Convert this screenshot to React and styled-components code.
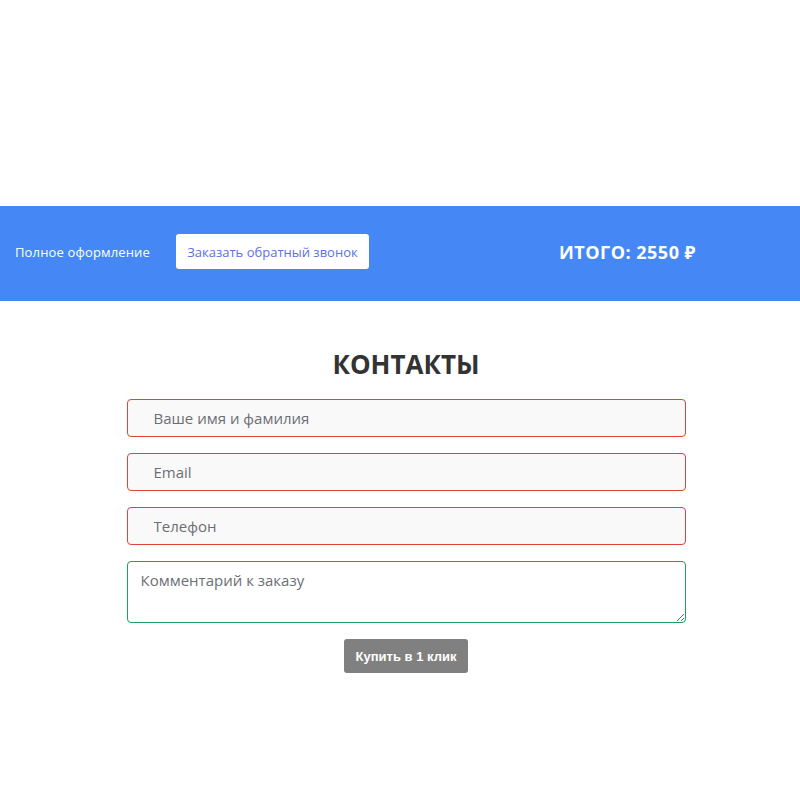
import React from "react";
import styled, { createGlobalStyle } from "styled-components";

const GlobalStyle = createGlobalStyle`
  body {
    margin: 0;
    background: #ffffff;
    font-family: "Open Sans", "Noto Sans", sans-serif;
  }
`;

const Page = styled.div`
  padding-top: 206px;
`;

const Bar = styled.div`
  box-sizing: border-box;
  height: 95px;
  background: #4487f5;
  display: flex;
  align-items: center;
  padding: 0 0 4px 15px;
`;

const BarLabel = styled.span`
  color: #ffffff;
  font-size: 13px;
  letter-spacing: 0.15px;
`;

const CallButton = styled.button`
  margin-left: 26px;
  height: 35px;
  width: 193px;
  border: none;
  border-radius: 3px;
  background: #ffffff;
  color: #5b6fe6;
  font-family: inherit;
  font-size: 13px;
  cursor: pointer;
`;

const Total = styled.div`
  margin-left: 190px;
  color: #ffffff;
  font-size: 18px;
  font-weight: 700;
  letter-spacing: 0.5px;
`;

const Contacts = styled.form`
  width: 559px;
  margin: 0 auto;
  padding-top: 47px;
  display: flex;
  flex-direction: column;
  align-items: center;
  transform: translateX(6px);
`;

const Heading = styled.h2`
  margin: 0 0 19px;
  font-size: 26px;
  font-weight: 700;
  color: #333333;
  line-height: 32px;
`;

const Field = styled.input`
  box-sizing: border-box;
  width: 100%;
  height: 38px;
  margin-bottom: 16px;
  padding: 0 26px;
  border: 1px solid #e0443a;
  border-radius: 4px;
  background: #f9f9f9;
  font-family: inherit;
  font-size: 15px;
  color: #333;
  &::placeholder {
    color: #6b6f75;
  }
`;

const Comment = styled.textarea`
  box-sizing: border-box;
  width: 100%;
  height: 62px;
  padding: 8px 13px;
  border: 1px solid #1e9e5a;
  border-radius: 4px;
  background: #ffffff;
  font-family: inherit;
  font-size: 15px;
  &::placeholder {
    color: #6b6f75;
  }
`;

const BuyButton = styled.button`
  margin-top: 16px;
  height: 34px;
  padding: 0 12px;
  border: none;
  border-radius: 3px;
  background: #808080;
  color: #ffffff;
  font-family: "Liberation Sans", Arial, sans-serif;
  font-size: 13px;
  font-weight: 600;
  cursor: pointer;
`;

export default function App() {
  return (
    <>
      <GlobalStyle />
      <Page>
        <Bar>
          <BarLabel>Полное оформление</BarLabel>
          <CallButton type="button">Заказать обратный звонок</CallButton>
          <Total>ИТОГО: 2550 ₽</Total>
        </Bar>
        <Contacts>
          <Heading>КОНТАКТЫ</Heading>
          <Field placeholder="Ваше имя и фамилия" />
          <Field placeholder="Email" />
          <Field placeholder="Телефон" />
          <Comment placeholder="Комментарий к заказу" />
          <BuyButton type="button">Купить в 1 клик</BuyButton>
        </Contacts>
      </Page>
    </>
  );
}
